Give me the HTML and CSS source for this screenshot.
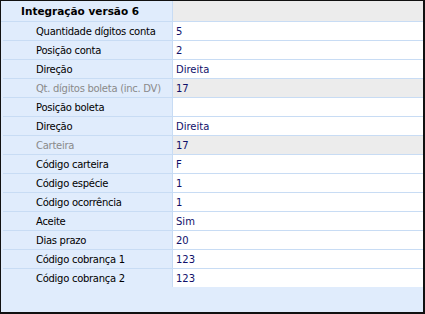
FILE: index.html
```html
<!DOCTYPE html>
<html>
	<head>
		<title>Integração versão 6</title>
		<link rel="stylesheet" href="styles.css">
	</head>
	<body>
		<div class="grid">
			<div class="row head">
				<div class="name">Integração versão 6</div>
				<div class="val"></div>
			</div>
			<div class="row">
				<div class="name">Quantidade dígitos conta</div>
				<div class="val">5</div>
			</div>
			<div class="row">
				<div class="name">Posição conta</div>
				<div class="val">2</div>
			</div>
			<div class="row">
				<div class="name">Direção</div>
				<div class="val">Direita</div>
			</div>
			<div class="row off">
				<div class="name">Qt. dígitos boleta (inc. DV)</div>
				<div class="val">17</div>
			</div>
			<div class="row">
				<div class="name">Posição boleta</div>
				<div class="val"></div>
			</div>
			<div class="row">
				<div class="name">Direção</div>
				<div class="val">Direita</div>
			</div>
			<div class="row off">
				<div class="name">Carteira</div>
				<div class="val">17</div>
			</div>
			<div class="row">
				<div class="name">Código carteira</div>
				<div class="val">F</div>
			</div>
			<div class="row">
				<div class="name">Código espécie</div>
				<div class="val">1</div>
			</div>
			<div class="row">
				<div class="name">Código ocorrência</div>
				<div class="val">1</div>
			</div>
			<div class="row">
				<div class="name">Aceite</div>
				<div class="val">Sim</div>
			</div>
			<div class="row">
				<div class="name">Dias prazo</div>
				<div class="val">20</div>
			</div>
			<div class="row">
				<div class="name">Código cobrança 1</div>
				<div class="val">123</div>
			</div>
			<div class="row last">
				<div class="name">Código cobrança 2</div>
				<div class="val">123</div>
			</div>
		</div>
	</body>
</html>
```
FILE: styles.css
```css
html, body {
	margin : 0;
	padding : 0;
}
body {
	font-family : "DejaVu Sans", Tahoma, sans-serif;
	font-size : 10px;
	color : #000;
}
.grid {
	box-sizing : border-box;
	width : 425px;
	height : 314px;
	background-color : #e0ecfc;
	border-style : solid;
	border-color : #111;
	border-width : 1px 2px 2px 1px;
	padding-left : 2px;
}
.row {
	display : flex;
	height : 18px;
	border-bottom : 1px solid #c8dcf4;
}
.row.last {
	border-bottom : none;
}
.row.head {
	height : 20px;
	margin-left : -2px;
}
.name {
	box-sizing : border-box;
	width : 170px;
	padding-left : 33px;
	padding-top : 1px;
	line-height : 17px;
	letter-spacing : -0.28px;
	border-right : 1px solid #c8dcf4;
	white-space : nowrap;
	overflow : hidden;
}
.head .name {
	width : 172px;
	padding-left : 20px;
	padding-top : 0;
	font-weight : bold;
	font-size : 10.5px;
	letter-spacing : 0;
	line-height : 20px;
}
.val {
	box-sizing : border-box;
	flex : 1;
	padding-left : 3px;
	padding-top : 1px;
	line-height : 17px;
	background-color : #fff;
	color : #10106a;
}
.head .val, .off .val {
	background-color : #ececec;
}
.off .name {
	color : #8a8a8a;
}
```
